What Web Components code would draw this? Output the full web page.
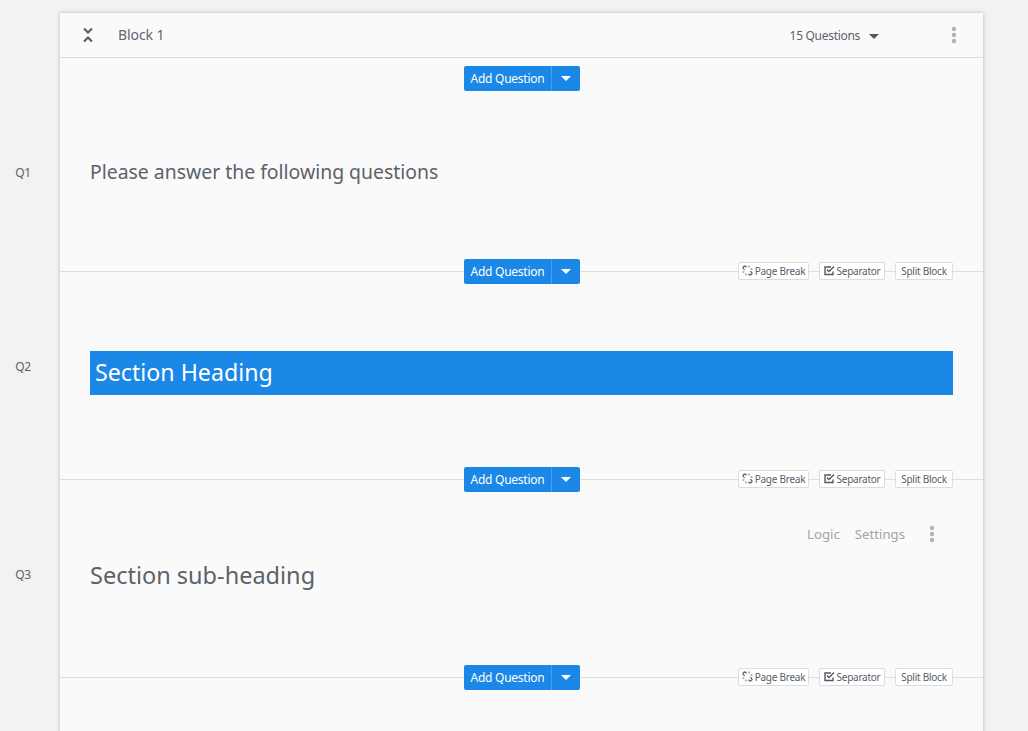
<!DOCTYPE html>
<html lang="en">
<head>
<meta charset="utf-8">
<title>Survey builder</title>
<style>
    html, body { height: 100%; }
    body {
        margin: 0;
        overflow: hidden;
        background: #f2f2f2;
        font-family: "Noto Sans", "Open Sans", sans-serif;
        color: #5b626b;
    }
    survey-page { --blue: #1b87e6; --line: #dcdcdc; }
</style>
</head>
<body>
<survey-page>
    <block-header name="Block 1" count="15 Questions"></block-header>
    <insert-bar plain></insert-bar>

    <question-row label="Q1" top="67" bottom="74" label-top="74">
        <span style="font-size:19.4px;line-height:27px;display:block">Please answer the following questions</span>
    </question-row>
    <insert-bar></insert-bar>

    <question-row label="Q2" top="67" bottom="72" label-top="75">
        <section-banner>Section Heading</section-banner>
    </question-row>
    <insert-bar></insert-bar>

    <question-row label="Q3" top="33" bottom="74" label-top="75">
        <row-tools></row-tools>
        <span style="font-size:23.5px;line-height:32px;display:block;margin-top:16px">Section sub-heading</span>
    </question-row>
    <insert-bar></insert-bar>

    <question-row label="" top="60" bottom="0" label-top="75"></question-row>
</survey-page>

<script>
const dots = `<svg width="6" height="18" viewBox="0 0 6 18" fill="#b3b3b3"><circle cx="3" cy="3" r="2.2"/><circle cx="3" cy="9" r="2.2"/><circle cx="3" cy="15" r="2.2"/></svg>`;

class SurveyPage extends HTMLElement {
    constructor() {
        super();
        this.attachShadow({ mode: 'open' });
    }

    connectedCallback() {
        this.shadowRoot.innerHTML = `
            <style>
                :host {
                    display: block;
                    width: 923px;
                    margin: 13px 0 0 60px;
                    background: #fafafa;
                    box-shadow: 0 0 4px rgba(0, 0, 0, 0.25);
                }
            </style>
            <slot></slot>`;
    }
}

class BlockHeader extends HTMLElement {
    constructor() {
        super();
        this.attachShadow({ mode: 'open' });
    }

    connectedCallback() {
        this.shadowRoot.innerHTML = `
            <style>
                :host {
                    display: flex;
                    align-items: center;
                    height: 44px;
                    border-bottom: 1px solid var(--line);
                    padding: 0 26px 0 23px;
                }
                .collapse { display: flex; }
                .name { margin: 0 0 1px 25px; font-size: 14px; letter-spacing: -0.1px; color: #5c6773; }
                .count {
                    margin-left: auto;
                    display: flex;
                    align-items: center;
                    gap: 9px;
                    font-size: 12px;
                    letter-spacing: -0.3px;
                    color: #5b626b;
                }
                .caret {
                    border: 5px solid transparent;
                    border-top-color: #555;
                    border-bottom: 0;
                    margin-top: 2px;
                }
                .more { display: flex; margin-left: 72px; }
            </style>
            <span class="collapse">
                <svg width="10" height="16" viewBox="0 0 10 16" fill="none" stroke="#5a5a5a" stroke-width="2">
                    <path d="M1 1.5 L5 5.5 L9 1.5"/>
                    <path d="M1 14.5 L5 10.5 L9 14.5"/>
                </svg>
            </span>
            <span class="name">${this.getAttribute('name')}</span>
            <span class="count">${this.getAttribute('count')}<i class="caret"></i></span>
            <span class="more">${dots}</span>`;
    }
}

class AddQuestion extends HTMLElement {
    constructor() {
        super();
        this.attachShadow({ mode: 'open' });
    }

    connectedCallback() {
        this.shadowRoot.innerHTML = `
            <style>
                :host {
                    display: flex;
                    height: 25px;
                    width: 116px;
                    background: var(--blue);
                    border-radius: 2px;
                    color: #fff;
                    font-size: 12px;
                    letter-spacing: -0.25px;
                }
                .label {
                    flex: 1;
                    display: flex;
                    align-items: center;
                    justify-content: center;
                    padding-bottom: 1px;
                    border-right: 1px solid #4ba0ec;
                }
                .drop {
                    width: 28px;
                    display: flex;
                    align-items: center;
                    justify-content: center;
                }
                .drop i {
                    border: 5px solid transparent;
                    border-top-color: #fff;
                    border-bottom: 0;
                }
            </style>
            <span class="label">Add Question</span>
            <span class="drop"><i></i></span>`;
    }
}

class ChipButton extends HTMLElement {
    constructor() {
        super();
        this.attachShadow({ mode: 'open' });
    }

    connectedCallback() {
        this.shadowRoot.innerHTML = `
            <style>
                :host {
                    display: inline-flex;
                    align-items: center;
                    justify-content: center;
                    gap: 2px;
                    box-sizing: border-box;
                    height: 18px;
                    margin-top: -1px;
                    padding-bottom: 1px;
                    background: #fff;
                    border: 1px solid #dcdcdc;
                    border-radius: 2px;
                    font-size: 10px;
                    letter-spacing: -0.25px;
                    color: #55606c;
                    white-space: nowrap;
                }
                ::slotted(svg) { flex: none; }
            </style>
            <slot></slot>`;
    }
}

class InsertBar extends HTMLElement {
    constructor() {
        super();
        this.attachShadow({ mode: 'open' });
    }

    connectedCallback() {
        const plain = this.hasAttribute('plain');
        const chips = plain ? '' : `
            <span class="rule" style="flex:none;width:158px"></span>
            <chip-button style="width:71px">
                <svg width="11" height="11" viewBox="0 0 11 11" fill="none" stroke="#55606c" stroke-width="1.3">
                    <path d="M4.5 2.2 L3.5 1.2 Q2.6 .6 1.6 1.6 Q.6 2.6 1.4 3.6 L2.6 4.8"/>
                    <path d="M6.5 8.8 L7.5 9.8 Q8.4 10.4 9.4 9.4 Q10.4 8.4 9.6 7.4 L8.4 6.2"/>
                    <path d="M7 .6 V2.4 M10.4 4 H8.6 M.6 7 H2.4 M4 10.4 V8.6" stroke-width="1"/>
                </svg>Page Break</chip-button>
            <span class="rule gap"></span>
            <chip-button style="width:66px">
                <svg width="11" height="11" viewBox="0 0 11 11" fill="none" stroke="#4f5a66" stroke-width="1.4">
                    <path d="M9 6.5 V9.5 H1 V2 H7"/>
                    <path d="M3 4.5 L5 6.5 L10 1.5"/>
                </svg>Separator</chip-button>
            <span class="rule gap"></span>
            <chip-button style="width:58px">Split Block</chip-button>
            <span class="rule"></span>`;
        this.shadowRoot.innerHTML = `
            <style>
                :host {
                    display: block;
                    height: 25px;
                    ${plain ? 'margin-top: 8px;' : ''}
                }
                .bar { display: flex; align-items: center; height: 25px; }
                .rule { flex: 1; height: 1px; background: var(--line); }
                .rule.gap { flex: none; width: 10px; }
                .lead { flex: none; width: 404px; height: 1px; background: var(--line); }
                .bar.plain .lead { background: none; }
            </style>
            <div class="bar ${plain ? 'plain' : ''}">
                <span class="lead"></span>
                <add-question></add-question>
                ${chips}
            </div>`;
    }
}

class QuestionRow extends HTMLElement {
    constructor() {
        super();
        this.attachShadow({ mode: 'open' });
    }

    connectedCallback() {
        const top = this.getAttribute('top');
        const bottom = this.getAttribute('bottom');
        this.shadowRoot.innerHTML = `
            <style>
                :host {
                    display: flex;
                    padding-right: 30px;
                }
                .num {
                    flex: none;
                    width: 60px;
                    margin: ${this.getAttribute('label-top')}px 30px 0 -60px;
                    text-align: center;
                    box-sizing: border-box;
                    padding-right: 14px;
                    font-size: 12px;
                    letter-spacing: -0.4px;
                    color: #5b626b;
                    line-height: 16px;
                }
                .body { flex: 1; min-width: 0; padding: ${top}px 0 ${bottom}px; }
            </style>
            <span class="num">${this.getAttribute('label')}</span>
            <div class="body"><slot></slot></div>`;
    }
}

class SectionBanner extends HTMLElement {
    constructor() {
        super();
        this.attachShadow({ mode: 'open' });
    }

    connectedCallback() {
        this.shadowRoot.innerHTML = `
            <style>
                :host {
                    display: flex;
                    align-items: center;
                    box-sizing: border-box;
                    height: 44px;
                    padding: 0 0 3px 5px;
                    background: var(--blue);
                    color: #fff;
                    font-size: 23.2px;
                }
            </style>
            <slot></slot>`;
    }
}

class RowTools extends HTMLElement {
    constructor() {
        super();
        this.attachShadow({ mode: 'open' });
    }

    connectedCallback() {
        this.shadowRoot.innerHTML = `
            <style>
                :host {
                    display: flex;
                    justify-content: flex-end;
                    align-items: center;
                    height: 18px;
                    padding-right: 18px;
                    font-size: 13.2px;
                    color: #a3a3a3;
                }
                span { margin-left: 15px; }
                .more { display: flex; margin-left: 24px; }
            </style>
            <span>Logic</span>
            <span>Settings</span>
            <span class="more">${dots}</span>`;
    }
}

customElements.define('survey-page', SurveyPage);
customElements.define('block-header', BlockHeader);
customElements.define('add-question', AddQuestion);
customElements.define('chip-button', ChipButton);
customElements.define('insert-bar', InsertBar);
customElements.define('question-row', QuestionRow);
customElements.define('section-banner', SectionBanner);
customElements.define('row-tools', RowTools);
</script>
</body>
</html>
